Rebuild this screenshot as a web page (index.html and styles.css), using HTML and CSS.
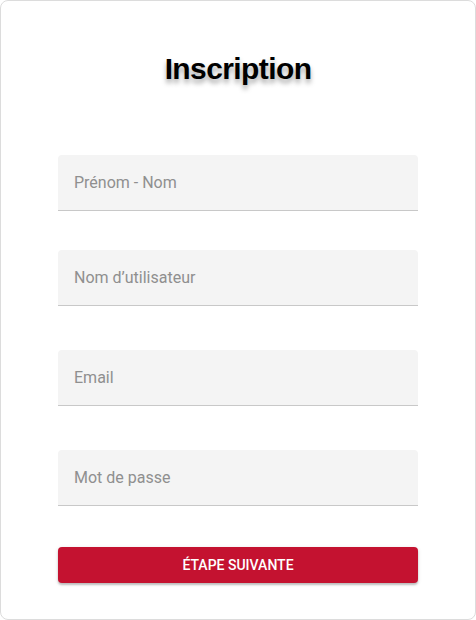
FILE: index.html
```html
<!DOCTYPE html>
<html lang="fr">
<head>
<meta charset="utf-8">
<title>Inscription</title>
<link rel="stylesheet" href="styles.css">
</head>
<body>
<div class="card">
  <h1 class="title">Inscription</h1>
  <form class="form">
    <div class="field f1"><span class="ph">Prénom - Nom</span></div>
    <div class="field f2"><span class="ph">Nom d’utilisateur</span></div>
    <div class="field f3"><span class="ph">Email</span></div>
    <div class="field f4"><span class="ph">Mot de passe</span></div>
    <button type="button" class="btn">Étape suivante</button>
  </form>
</div>
</body>
</html>
```
FILE: styles.css
```css
html, body {
  margin: 0;
  padding: 0;
  background: #fff;
}
.card {
  box-sizing: border-box;
  width: 476px;
  height: 620px;
  border: 1px solid #dcdcdc;
  border-radius: 8px;
  padding-top: 48px;
  display: flex;
  flex-direction: column;
  align-items: center;
}
.title {
  margin: 0;
  font-family: "Liberation Sans", Arial, sans-serif;
  font-weight: 700;
  font-size: 30px;
  line-height: 40px;
  letter-spacing: -0.6px;
  color: #000;
  text-shadow: 0 4px 5px rgba(0, 0, 0, 0.35);
}
.form {
  width: 360px;
  display: flex;
  flex-direction: column;
  margin-top: 66px;
}
.field {
  box-sizing: border-box;
  height: 56px;
  background: #f4f4f4;
  border-bottom: 1px solid #c8c8c8;
  border-radius: 4px 4px 0 0;
  padding: 0 16px;
  display: flex;
  align-items: center;
}
.f2 { margin-top: 39px; }
.f3, .f4 { margin-top: 44px; }
.ph {
  font-family: Roboto, "Noto Sans", sans-serif;
  font-size: 16px;
  color: #8f8f8f;
}
.btn {
  margin-top: 41px;
  height: 36px;
  border: none;
  border-radius: 4px;
  background: #c41230;
  color: #fff;
  font-family: Roboto, "Noto Sans", sans-serif;
  font-weight: 500;
  font-size: 14px;
  text-transform: uppercase;
  letter-spacing: 0;
  box-shadow: 0 2px 2px rgba(0, 0, 0, 0.2), 0 1px 4px rgba(0, 0, 0, 0.12);
  cursor: pointer;
}
```
